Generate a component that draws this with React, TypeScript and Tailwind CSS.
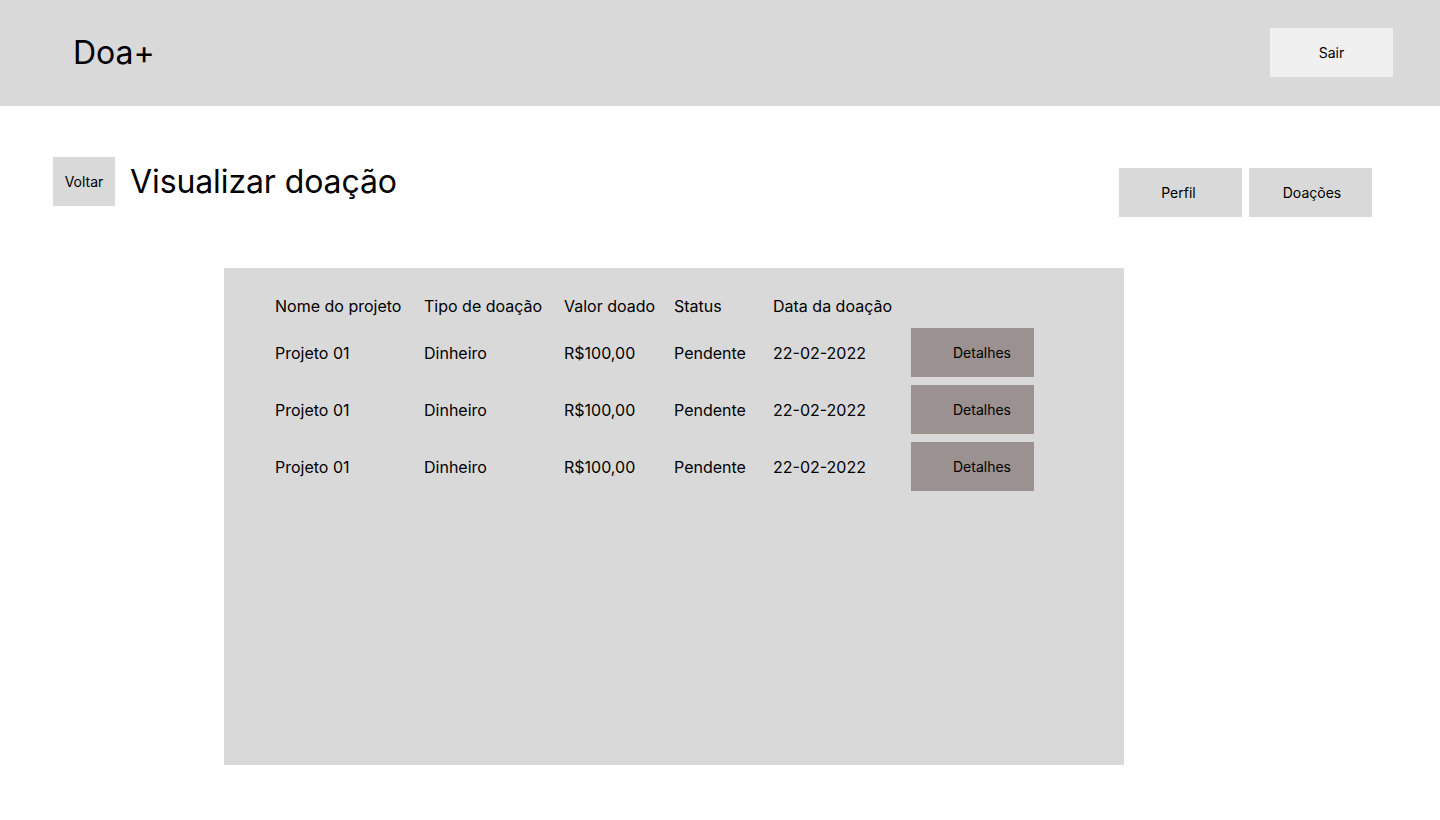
const rows = [
  { projeto: 'Projeto 01', tipo: 'Dinheiro', valor: 'R$100,00', status: 'Pendente', data: '22-02-2022' },
  { projeto: 'Projeto 01', tipo: 'Dinheiro', valor: 'R$100,00', status: 'Pendente', data: '22-02-2022' },
  { projeto: 'Projeto 01', tipo: 'Dinheiro', valor: 'R$100,00', status: 'Pendente', data: '22-02-2022' },
]

const cols = 'grid grid-cols-[149px_140px_110px_99px_138px_123px] items-center'

export default function App() {
  return (
    <div className="min-h-[820px] bg-white text-black font-['Inter',sans-serif]">
      {/* Top bar */}
      <header className="h-[106px] bg-[#d9d9d9] flex items-start justify-between pl-[73px] pr-[47px] pt-[28px]">
        <h1 className="text-[32px] leading-[49px]">Doa+</h1>
        <button className="w-[123px] h-[49px] bg-[#f0f0f0] text-[14px]">Sair</button>
      </header>

      {/* Title row */}
      <div className="flex items-start justify-between pl-[53px] pr-[68px] pt-[51px]">
        <div className="flex items-center gap-[15px]">
          <button className="w-[62px] h-[49px] bg-[#d9d9d9] text-[14px]">Voltar</button>
          <h2 className="text-[32px] leading-none tracking-[-0.1px]">Visualizar doação</h2>
        </div>
        <div className="flex gap-[7px] mt-[11px]">
          <button className="w-[123px] h-[49px] bg-[#d9d9d9] text-[14px] pr-[4px]">Perfil</button>
          <button className="w-[123px] h-[49px] bg-[#d9d9d9] text-[14px] pl-[3px]">Doações</button>
        </div>
      </div>

      {/* Table panel */}
      <div className="ml-[224px] mt-[51px] w-[900px] h-[497px] bg-[#d9d9d9] pl-[51px] pt-[28px]">
        <div className={`${cols} h-[20px] text-[16px] leading-[20px]`}>
          <span>Nome do projeto</span>
          <span>Tipo de doação</span>
          <span>Valor doado</span>
          <span>Status</span>
          <span>Data da doação</span>
          <span />
        </div>
        <div className="mt-[12px] flex flex-col gap-[8px]">
          {rows.map((r, i) => (
            <div key={i} className={`${cols} h-[49px] text-[16px] leading-[48px]`}>
              <span>{r.projeto}</span>
              <span>{r.tipo}</span>
              <span>{r.valor}</span>
              <span>{r.status}</span>
              <span>{r.data}</span>
              <button className="h-[49px] bg-[#9b9190] text-[14px] text-left pl-[42px]">Detalhes</button>
            </div>
          ))}
        </div>
      </div>
    </div>
  )
}
